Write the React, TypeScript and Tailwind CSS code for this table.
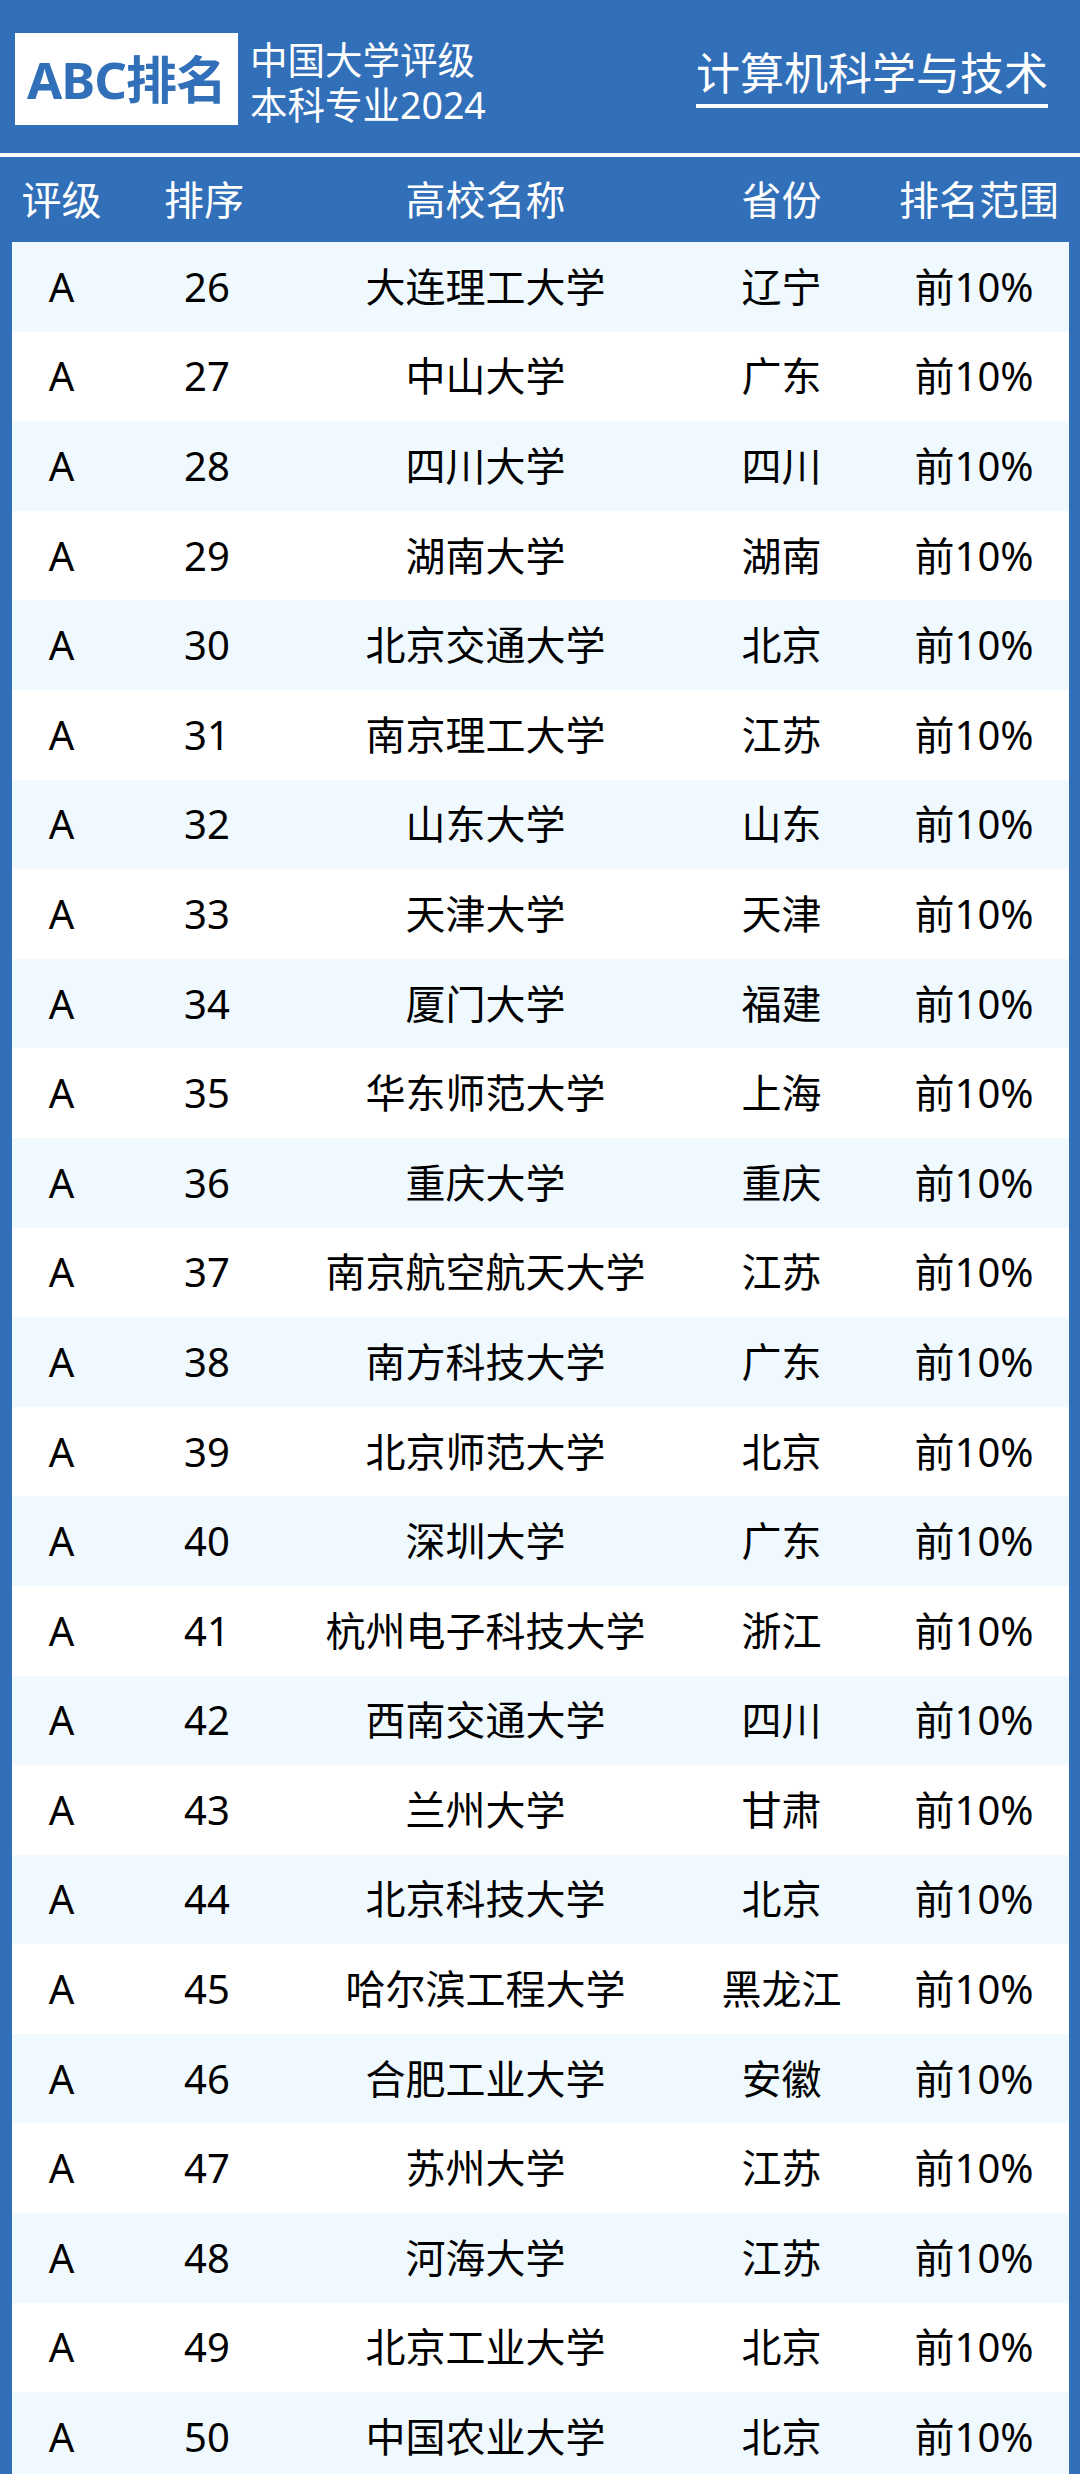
const rows: [string, string, string][] = [
  ["26", "大连理工大学", "辽宁"],
  ["27", "中山大学", "广东"],
  ["28", "四川大学", "四川"],
  ["29", "湖南大学", "湖南"],
  ["30", "北京交通大学", "北京"],
  ["31", "南京理工大学", "江苏"],
  ["32", "山东大学", "山东"],
  ["33", "天津大学", "天津"],
  ["34", "厦门大学", "福建"],
  ["35", "华东师范大学", "上海"],
  ["36", "重庆大学", "重庆"],
  ["37", "南京航空航天大学", "江苏"],
  ["38", "南方科技大学", "广东"],
  ["39", "北京师范大学", "北京"],
  ["40", "深圳大学", "广东"],
  ["41", "杭州电子科技大学", "浙江"],
  ["42", "西南交通大学", "四川"],
  ["43", "兰州大学", "甘肃"],
  ["44", "北京科技大学", "北京"],
  ["45", "哈尔滨工程大学", "黑龙江"],
  ["46", "合肥工业大学", "安徽"],
  ["47", "苏州大学", "江苏"],
  ["48", "河海大学", "江苏"],
  ["49", "北京工业大学", "北京"],
  ["50", "中国农业大学", "北京"],
];

const cols = "grid grid-cols-[99px_186px_377px_215px_1fr] items-center text-center";

export default function App() {
  return (
    <div
      className="h-[2474px] w-[1080px] overflow-hidden bg-[#316fb9]"
      style={{ fontFamily: '"Noto Sans", "Noto Sans CJK SC", sans-serif' }}
    >
      {/* Title bar */}
      <header className="flex h-[153px] items-start justify-between pl-[15px] pr-[32px] pt-[31px]">
        <div className="flex items-center gap-[12px]">
          <div className="flex h-[92px] w-[223px] shrink-0 items-center justify-center bg-white">
            <span className="text-[51px] font-bold leading-none tracking-[-1px] whitespace-nowrap text-[#316fb9]">ABC排名</span>
          </div>
          <div className="pt-[6px] text-[37.5px] leading-[45px] text-white">
            <div>中国大学评级</div>
            <div>本科专业2024</div>
          </div>
        </div>
        <div className="mt-[20px] border-b-4 border-white pb-[9px] text-[44px] leading-none text-white">
          计算机科学与技术
        </div>
      </header>
      <div className="h-[4px] bg-white" />

      {/* Column titles */}
      <div className={`${cols} h-[85px] pl-[12px] pr-[11px] text-[40px] leading-none text-white`}>
        <div>评级</div>
        <div>排序</div>
        <div>高校名称</div>
        <div>省份</div>
        <div>排名范围</div>
      </div>

      {/* Table body */}
      <div className="ml-[12px] mr-[11px]">
        {rows.map(([rank, name, prov], i) => (
          <div
            key={rank}
            className={`${cols} h-[89.6px] text-[40px] leading-none text-black ${i % 2 === 0 ? "bg-[#f0f9fe]" : "bg-white"}`}
          >
            <div>A</div>
            <div className="pl-[6px]">{rank}</div>
            <div>{name}</div>
            <div>{prov}</div>
            <div className="pr-[10px]">前10%</div>
          </div>
        ))}
      </div>
    </div>
  );
}
